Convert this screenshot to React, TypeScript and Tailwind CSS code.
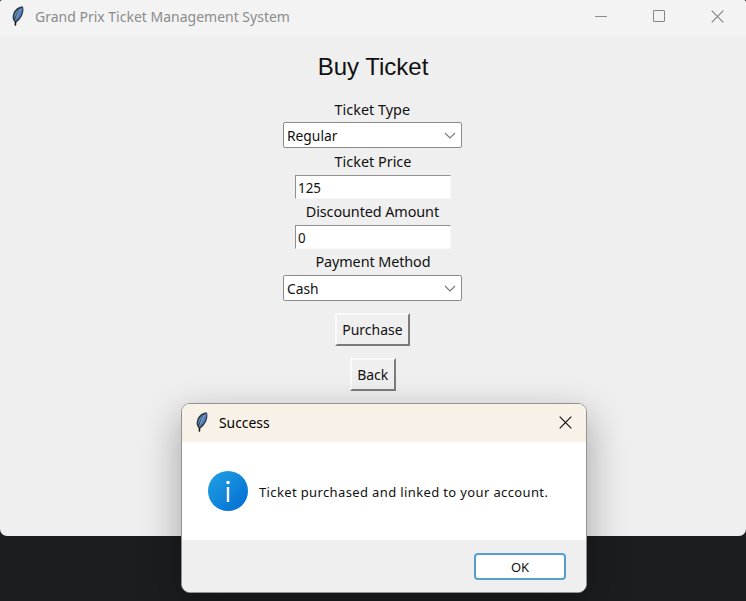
import React from "react";

function Feather() {
  return (
    <svg className="block h-5 w-3" viewBox="0 0 12 20">
      <path d="M2.9 19.6 L3 16 C0 14.2 0.2 9.6 1.8 6.2 C3.6 2.4 7.6 0 11 0.5 C12 3.8 11.2 7.6 9.6 10.6 C8.2 13.2 6.4 15.4 4.4 16.2 L4 19.6 Z" fill="#2b3847" />
      <path d="M4.3 14.4 C8.2 12.4 10.9 6 10.4 1.6 C7.2 2.4 5 7.6 4.3 14.4 Z" fill="#5382c4" />
      <path d="M2.4 13.2 C1.2 9.6 3.4 5 7.4 2.6 C5 6.8 3.6 9.8 2.4 13.2 Z" fill="#6087ab" />
      <path d="M3.4 16.4 C3.8 11.4 5.6 6.6 8.6 2.6" stroke="#a3c0df" strokeWidth="0.7" fill="none" />
      <path d="M3.4 15 V19.6" stroke="#161a20" strokeWidth="1.4" fill="none" />
    </svg>
  );
}

function Label({ children, className = "" }: { children: React.ReactNode; className?: string }) {
  return (
    <div className={`mr-px flex justify-center text-[15px] leading-[22px] whitespace-nowrap ${className}`}>
      <span className="inline-block scale-x-[0.96]">{children}</span>
    </div>
  );
}

function Combo({ value, className = "" }: { value: string; className?: string }) {
  return (
    <div className={`mr-[2px] flex h-[26px] w-[179px] items-center justify-between rounded-[2px] border border-[#8b8b8b] bg-white pr-[5px] pl-[3px] text-[15px] leading-none ${className}`}>
      <span className="inline-block origin-left scale-x-[0.92]">{value}</span>
      <svg className="h-[7px] w-3" viewBox="0 0 12 7" fill="none" stroke="#777" strokeWidth="1.1">
        <path d="M1 1 L6 6 L11 1" />
      </svg>
    </div>
  );
}

function Entry({ value }: { value: string }) {
  return (
    <div className="flex h-6 w-[156px] items-center border border-t-[#909090] border-r-[#f8f8f8] border-b-[#f8f8f8] border-l-[#909090] bg-white pl-[2px] text-[15px] leading-none">
      <span className="inline-block origin-left scale-x-[0.89]">{value}</span>
    </div>
  );
}

function TkButton({ children, className }: { children: React.ReactNode; className: string }) {
  return (
    <button className={`flex h-[33px] items-center justify-center border-2 border-t-[#fafafa] border-r-[#7b7b7b] border-b-[#7b7b7b] border-l-[#fafafa] bg-[#efefef] text-[15px] leading-none ${className}`}>
      <span className="inline-block scale-x-[0.93]">{children}</span>
    </button>
  );
}

function Close({ color }: { color: string }) {
  return (
    <svg className="h-[13px] w-[13px]" viewBox="0 0 13 13" fill="none" stroke={color} strokeWidth="1.2">
      <path d="M0.7 0.7 L12.3 12.3 M12.3 0.7 L0.7 12.3" />
    </svg>
  );
}

export default function App() {
  return (
    <div className="relative h-[601px] w-[746px] overflow-hidden bg-[#1c1d20] font-['Noto_Sans',sans-serif] text-[#111]">
      <div className="flex h-[536px] w-[746px] flex-col overflow-hidden rounded-t-[3px] rounded-b-[7px] bg-[#efefef]">
        <header className="flex h-9 shrink-0 items-center bg-[#f3f3f3] pb-1 pl-3 text-[#8b8b8b]">
          <Feather />
          <span className="ml-[11px] inline-block origin-left scale-x-[0.933] text-[15px] leading-5 whitespace-nowrap">Grand Prix Ticket Management System</span>
          <div className="ml-auto flex items-center pr-[22px]">
            <div className="mr-[46px] h-px w-3 bg-[#8b8b8b]" />
            <div className="mr-[46px] h-3 w-3 rounded-[1px] border border-[#858585]" />
            <Close color="#858585" />
          </div>
        </header>
        <main className="flex flex-col items-center">
          <h1 className="mt-[15px] font-['Liberation_Sans',sans-serif] text-[24px] leading-8">Buy Ticket</h1>
          <Label className="mt-[15px]">Ticket Type</Label>
          <Combo value="Regular" className="mt-[2px]" />
          <Label className="mt-[2px]">Ticket Price</Label>
          <div className="mt-[3px]"><Entry value="125" /></div>
          <Label className="mt-px tracking-[-0.1px]">Discounted Amount</Label>
          <div className="mt-[3px]"><Entry value="0" /></div>
          <Label className="mt-px tracking-[-0.1px]">Payment Method</Label>
          <Combo value="Cash" className="mt-[3px]" />
          <TkButton className="mt-3 mr-[2px] w-[75px]">Purchase</TkButton>
          <TkButton className="mt-3 mr-px w-[46px]">Back</TkButton>
        </main>
      </div>

      <section className="absolute top-[403px] left-[181px] flex h-[190px] w-[406px] flex-col overflow-hidden rounded-[9px] border border-[#929292] bg-white shadow-[0_14px_38px_2px_rgba(0,0,0,0.3)]">
        <header className="flex h-[38px] shrink-0 items-center bg-[#f8f1e8] pr-[14px] pb-[2px] pl-[14px] text-black">
          <Feather />
          <span className="ml-[11px] inline-block origin-left scale-x-[0.925] text-[15px] leading-5">Success</span>
          <div className="ml-auto"><Close color="#111" /></div>
        </header>
        <div className="flex h-[98px] shrink-0 items-center pl-[26px]">
          <svg className="h-10 w-10" viewBox="0 0 40 40">
            <defs>
              <linearGradient id="info" x1="0" y1="0" x2="1" y2="1">
                <stop offset="0.1" stopColor="#1d9de2" />
                <stop offset="0.9" stopColor="#0670d4" />
              </linearGradient>
            </defs>
            <circle cx="20" cy="20" r="20" fill="url(#info)" />
            <circle cx="20" cy="11.5" r="1.8" fill="#fff" />
            <rect x="18.8" y="16" width="2.4" height="15" fill="#fff" />
          </svg>
          <span className="ml-[11px] pt-px text-[13px] leading-5 tracking-[0.37px] whitespace-nowrap">Ticket purchased and linked to your account.</span>
        </div>
        <footer className="flex flex-1 justify-end bg-[#efefef] pt-[13px] pr-5">
          <button className="flex h-[27px] w-[92px] items-center justify-center rounded-[4px] border-2 border-[#559fd2] bg-white text-[13px] leading-none">
            <span className="pt-px">OK</span>
          </button>
        </footer>
      </section>
    </div>
  );
}
